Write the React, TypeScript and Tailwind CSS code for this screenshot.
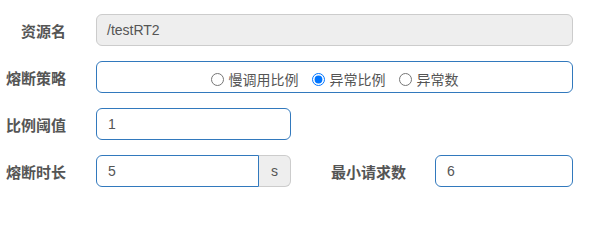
import React from 'react'

const cjk = "font-['Liberation_Sans','Noto_Sans_CJK_SC',sans-serif]"

function Label({ children, className = '' }: { children: React.ReactNode; className?: string }) {
  return (
    <label className={`pt-[8px] text-right text-[15px] font-bold leading-[20px] text-[#555] ${className}`}>
      {children}
    </label>
  )
}

function Radio({ label, checked = false }: { label: string; checked?: boolean }) {
  return (
    <label className="flex items-center gap-[5px]">
      <input type="radio" name="strategy" defaultChecked={checked} className="m-0 h-[13px] w-[13px]" />
      <span>{label}</span>
    </label>
  )
}

export default function App() {
  return (
    <div className={`w-[606px] h-[205px] bg-white pt-[14px] ${cjk} text-[14px] text-[#555]`}>
      <div className="flex flex-col gap-[15px]">
        {/* 资源名 */}
        <div className="flex gap-[30px]">
          <Label className="w-[66px]">资源名</Label>
          <div className="h-[32px] w-[477px] rounded-[6px] border border-[#ccc] bg-[#eee] pl-[10px] leading-[30px]">
            /testRT2
          </div>
        </div>

        {/* 熔断策略 */}
        <div className="flex gap-[30px]">
          <Label className="w-[66px]">熔断策略</Label>
          <div className="flex h-[32px] w-[477px] items-center justify-center gap-[13px] rounded-[6px] border border-[#3279bd] pt-[5px] leading-[20px]">
            <Radio label="慢调用比例" />
            <Radio label="异常比例" checked />
            <Radio label="异常数" />
          </div>
        </div>

        {/* 比例阈值 */}
        <div className="flex gap-[30px]">
          <Label className="w-[66px]">比例阈值</Label>
          <div className="h-[32px] w-[195px] rounded-[6px] border border-[#3279bd] pl-[11px] leading-[30px]">
            1
          </div>
        </div>

        {/* 熔断时长 / 最小请求数 */}
        <div className="flex">
          <Label className="w-[66px]">熔断时长</Label>
          <div className="ml-[30px] flex h-[32px] w-[195px]">
            <div className="flex-1 rounded-l-[6px] border border-[#3279bd] pl-[11px] leading-[30px]">5</div>
            <div className="w-[32px] rounded-r-[6px] border border-l-0 border-[#ccc] bg-[#eee] text-center leading-[30px]">
              s
            </div>
          </div>
          <Label className="ml-[39px] w-[76px]">最小请求数</Label>
          <div className="ml-[29px] h-[32px] w-[138px] rounded-[6px] border border-[#3279bd] pl-[11px] leading-[30px]">
            6
          </div>
        </div>
      </div>
    </div>
  )
}
